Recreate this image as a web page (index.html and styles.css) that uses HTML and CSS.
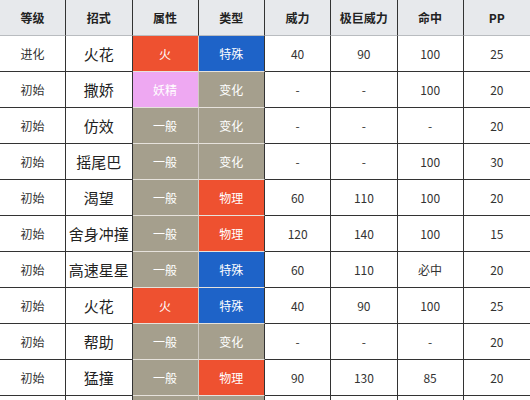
FILE: index.html
```html
<!DOCTYPE html>
<html lang="zh">
<head>
<meta charset="utf-8">
<link rel="stylesheet" href="styles.css">
</head>
<body>
<table class="moves">
  <thead>
    <tr>
      <th>等级</th><th>招式</th><th>属性</th><th>类型</th><th>威力</th><th>极巨威力</th><th>命中</th><th>PP</th>
    </tr>
  </thead>
  <tbody>
    <tr><td>进化</td><td class="name">火花</td><td class="c fire">火</td><td class="c special">特殊</td><td>40</td><td>90</td><td>100</td><td>25</td></tr>
    <tr><td>初始</td><td class="name">撒娇</td><td class="c fairy">妖精</td><td class="c status">变化</td><td>-</td><td>-</td><td>100</td><td>20</td></tr>
    <tr><td>初始</td><td class="name">仿效</td><td class="c normal">一般</td><td class="c status">变化</td><td>-</td><td>-</td><td>-</td><td>20</td></tr>
    <tr><td>初始</td><td class="name">摇尾巴</td><td class="c normal">一般</td><td class="c status">变化</td><td>-</td><td>-</td><td>100</td><td>30</td></tr>
    <tr><td>初始</td><td class="name">渴望</td><td class="c normal">一般</td><td class="c physical">物理</td><td>60</td><td>110</td><td>100</td><td>20</td></tr>
    <tr><td>初始</td><td class="name">舍身冲撞</td><td class="c normal">一般</td><td class="c physical">物理</td><td>120</td><td>140</td><td>100</td><td>15</td></tr>
    <tr><td>初始</td><td class="name">高速星星</td><td class="c normal">一般</td><td class="c special">特殊</td><td>60</td><td>110</td><td>必中</td><td>20</td></tr>
    <tr><td>初始</td><td class="name">火花</td><td class="c fire">火</td><td class="c special">特殊</td><td>40</td><td>90</td><td>100</td><td>25</td></tr>
    <tr><td>初始</td><td class="name">帮助</td><td class="c normal">一般</td><td class="c status">变化</td><td>-</td><td>-</td><td>-</td><td>20</td></tr>
    <tr><td>初始</td><td class="name">猛撞</td><td class="c normal">一般</td><td class="c physical">物理</td><td>90</td><td>130</td><td>85</td><td>20</td></tr>
    <tr class="partial"><td></td><td class="name"></td><td class="c normal"></td><td class="c status"></td><td></td><td></td><td></td><td></td></tr>
  </tbody>
</table>
</body>
</html>
```
FILE: styles.css
```css
html, body {
  margin: 0;
  padding: 0;
  background: #ffffff;
  overflow: hidden;
}

.moves {
  width: 530px;
  border-collapse: separate;
  border-spacing: 0;
  table-layout: fixed;
  font-family: "Noto Sans CJK SC", "Noto Sans", sans-serif;
  color: #333;
}

.moves th,
.moves td {
  padding: 0;
  text-align: center;
  vertical-align: middle;
  border-right: 1px solid #333;
  border-bottom: 1px solid #333;
  box-sizing: border-box;
}

.moves th:last-child,
.moves td:last-child {
  border-right: none;
}

.moves th {
  height: 36px;
  background: #e7e9ec;
  font-size: 12px;
  font-weight: 700;
  color: #222;
  border-bottom-color: #b9bcc0;
}

.moves td {
  height: 36px;
  font-size: 12px;
  line-height: 16px;
}

.moves td.name {
  font-size: 15px;
  color: #222;
}

.moves td.c {
  color: #fff;
  border-bottom-color: #e6e2dc;
}

.moves td.c:nth-child(3) {
  border-right-color: #cfcac2;
}

.fire { background: #ee5130; }
.special { background: #1e63c8; }
.fairy { background: #eea8f2; }
.normal { background: #a59f8d; }
.status { background: #a59f8d; }
.physical { background: #ee5130; }
```
